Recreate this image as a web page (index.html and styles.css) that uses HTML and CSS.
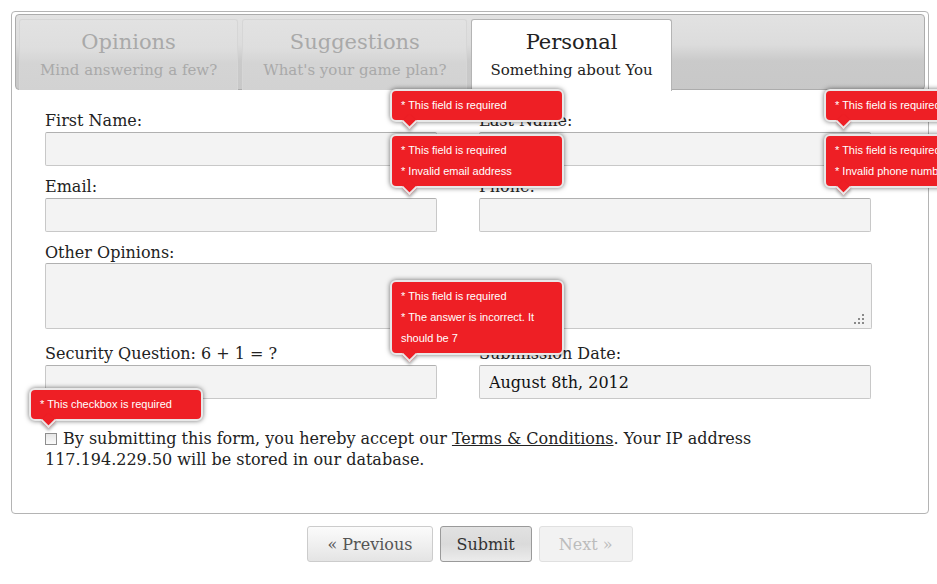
FILE: index.html
```html
<!DOCTYPE html>
<html>
<head>
<meta charset="utf-8">
<link rel="stylesheet" href="styles.css">
</head>
<body>
<div class="page">
  <div class="panel">
    <div class="tabbar">
      <div class="tab">
        <div class="tab-title">Opinions</div>
        <div class="tab-sub">Mind answering a few?</div>
      </div>
      <div class="tab">
        <div class="tab-title">Suggestions</div>
        <div class="tab-sub">What's your game plan?</div>
      </div>
      <div class="tab active">
        <div class="tab-title">Personal</div>
        <div class="tab-sub">Something about You</div>
      </div>
    </div>
    <form class="form">
      <div class="row">
        <div class="field">
          <label class="label">First Name:</label>
          <div class="control">
            <input class="input" type="text">
            <div class="tip"><div class="tip-line">* This field is required</div><span class="tip-arrow"></span></div>
          </div>
        </div>
        <div class="field">
          <label class="label">Last Name:</label>
          <div class="control">
            <input class="input" type="text">
            <div class="tip"><div class="tip-line">* This field is required</div><span class="tip-arrow"></span></div>
          </div>
        </div>
      </div>
      <div class="row">
        <div class="field">
          <label class="label">Email:</label>
          <div class="control">
            <input class="input" type="text">
            <div class="tip"><div class="tip-line">* This field is required</div><div class="tip-line">* Invalid email address</div><span class="tip-arrow"></span></div>
          </div>
        </div>
        <div class="field">
          <label class="label">Phone:</label>
          <div class="control">
            <input class="input" type="text">
            <div class="tip"><div class="tip-line">* This field is required</div><div class="tip-line">* Invalid phone number</div><span class="tip-arrow"></span></div>
          </div>
        </div>
      </div>
      <div class="field full">
        <label class="label">Other Opinions:</label>
        <div class="control">
          <textarea class="textarea"></textarea>
          <span class="grip"></span>
        </div>
      </div>
      <div class="row row-sec">
        <div class="field">
          <label class="label">Security Question: 6 + 1 = ?</label>
          <div class="control">
            <input class="input" type="text">
            <div class="tip"><div class="tip-line">* This field is required</div><div class="tip-line">* The answer is incorrect. It should be 7</div><span class="tip-arrow"></span></div>
          </div>
        </div>
        <div class="field">
          <label class="label">Submission Date:</label>
          <div class="control">
            <input class="input date" type="text" value="August 8th, 2012">
          </div>
        </div>
      </div>
      <p class="agree"><span class="check-wrap"><input class="check" type="checkbox"><span class="tip tip-check"><span class="tip-line">* This checkbox is required</span><span class="tip-arrow"></span></span></span>By submitting this form, you hereby accept our <a class="link" href="#">Terms &amp; Conditions</a>. Your IP address 117.194.229.50 will be stored in our database.</p>
    </form>
  </div>
  <div class="buttons">
    <button class="btn" type="button">&laquo; Previous</button>
    <button class="btn btn-submit" type="button">Submit</button>
    <button class="btn btn-disabled" type="button">Next &raquo;</button>
  </div>
</div>
</body>
</html>
```

FILE: styles.css
```css
* { box-sizing: border-box; }
html, body { margin: 0; padding: 0; background: #fff; }
body {
  overflow: hidden;
  font-family: "DejaVu Serif", "Liberation Serif", serif;
  color: #222;
}
.page {
  padding: 11px 8px 0 11px;
  width: 937px;
}
.panel {
  width: 918px;
  border: 1px solid #b4b4b4;
  border-radius: 4px;
  padding: 2px 3px 0 3px;
  height: 503px;
}
.tabbar {
  display: flex;
  gap: 4px;
  height: 76px;
  padding: 4px 3px 0 3px;
  border: 1px solid #acacac;
  border-radius: 4px;
  background: linear-gradient(to bottom, #e2e2e2 0%, #dcdcdc 40%, #cacaca 62%, #c8c8c8 100%);
}
.tab {
  height: 71px;
  padding: 7px 20px 0 20px;
  text-align: center;
  border: 1px solid #d6d6d6;
  border-bottom: none;
  border-radius: 3px 3px 0 0;
  background: linear-gradient(to bottom, #e2e2e2 0%, #dedede 40%, #d4d4d4 62%, #d2d2d2 100%);
  color: #a9a9a9;
}
.tab.active {
  background: #fff;
  border-color: #b4b4b4;
  color: #222;
  height: 72px;
  padding: 7px 18px 0 18px;
}
.tab-title {
  font-size: 21px;
  line-height: 30px;
}
.tab-sub {
  font-size: 15px;
  line-height: 22px;
  margin-top: 2px;
}
.form {
  padding: 20px 0 0 30px;
}
.row {
  display: flex;
  gap: 42px;
  margin-bottom: 10px;
}
.field {
  width: 392px;
}
.label {
  display: block;
  font-size: 16px;
  line-height: 22px;
  color: #222;
}
.control {
  position: relative;
}
.input {
  display: block;
  width: 100%;
  height: 34px;
  margin: 0;
  border: 1px solid #c8c8c8;
  border-top-color: #b0b0b0;
  border-radius: 2px;
  background: #f3f3f3;
  font-family: inherit;
  font-size: 16px;
  color: #111;
  padding: 0 9px;
  outline: none;
}
.field.full { width: 827px; margin-bottom: 14px; }
.field.full .label { line-height: 21px; }
.textarea {
  display: block;
  width: 827px;
  height: 66px;
  margin: 0;
  border: 1px solid #c8c8c8;
  border-top-color: #b0b0b0;
  border-radius: 2px;
  background: #f3f3f3;
  resize: none;
  outline: none;
}
.grip {
  position: absolute;
  right: 8px;
  bottom: 5px;
  width: 10px;
  height: 10px;
  background:
    linear-gradient(#8a8a8a, #8a8a8a) 8px 0 / 2px 2px no-repeat,
    linear-gradient(#8a8a8a, #8a8a8a) 4px 4px / 2px 2px no-repeat,
    linear-gradient(#8a8a8a, #8a8a8a) 8px 4px / 2px 2px no-repeat,
    linear-gradient(#8a8a8a, #8a8a8a) 0 8px / 2px 2px no-repeat,
    linear-gradient(#8a8a8a, #8a8a8a) 4px 8px / 2px 2px no-repeat,
    linear-gradient(#8a8a8a, #8a8a8a) 8px 8px / 2px 2px no-repeat;
}
.row-sec { margin-bottom: 29px; }
.agree {
  margin: 0;
  width: 780px;
  font-size: 16px;
  line-height: 21px;
  color: #222;
}
.check-wrap {
  position: relative;
  display: inline-block;
  width: 12px;
  height: 12px;
  margin-right: 6px;
  vertical-align: -1px;
}
.check {
  appearance: none;
  -webkit-appearance: none;
  display: block;
  margin: 0;
  width: 12px;
  height: 12px;
  border: 1px solid #8e8e8e;
  background: linear-gradient(to bottom, #e6e6e6, #fafafa);
}
.link {
  color: #222;
  text-decoration: underline;
}
/* tooltips */
.tip {
  position: absolute;
  left: 345px;
  bottom: calc(100% + 10px);
  width: 174px;
  padding: 4px 9px 4px 9px;
  background: #ee1f25;
  border: 2px solid #e8e8e8;
  border-radius: 6px;
  box-shadow: 0 0 5px rgba(0, 0, 0, 0.55);
  font-family: "Liberation Sans", Arial, sans-serif;
  font-size: 11px;
  line-height: 21px;
  color: #fff;
  z-index: 5;
}
.tip-line { display: block; }
.tip-arrow {
  position: absolute;
  left: 12px;
  bottom: -7px;
  width: 11px;
  height: 11px;
  background: #ee1f25;
  border-right: 2px solid #e8e8e8;
  border-bottom: 2px solid #e8e8e8;
  box-shadow: 2px 2px 3px rgba(0, 0, 0, 0.3);
  transform: rotate(45deg);
}
.tip-check {
  display: block;
  left: -16px;
  bottom: calc(100% + 12px);
  white-space: nowrap;
}
/* buttons */
.buttons {
  display: flex;
  justify-content: center;
  gap: 7px;
  padding: 12px 0 0 0;
  width: 918px;
}
.btn {
  height: 36px;
  padding: 0 19px;
  border: 1px solid #cccccc;
  border-radius: 3px;
  background: linear-gradient(to bottom, #fbfbfb 0%, #f0f0f0 50%, #e4e4e4 100%);
  font-family: inherit;
  font-size: 16px;
  color: #555;
}
.btn-submit {
  padding: 0 16px;
  border-color: #9a9a9a;
  background: linear-gradient(to bottom, #e2e2e2 0%, #dadada 50%, #ececec 100%);
  color: #333;
}
.btn-disabled {
  border-color: #e0e0e0;
  background: #f2f2f2;
  color: #bcbcbc;
}
```
